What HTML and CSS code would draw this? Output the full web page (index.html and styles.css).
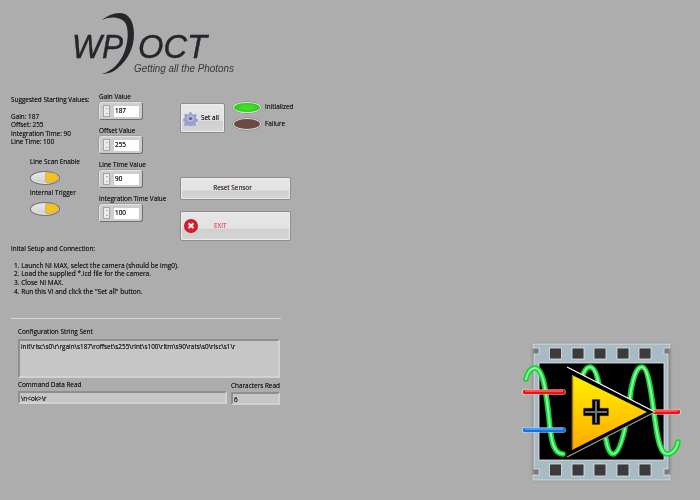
FILE: index.html
```html
<!DOCTYPE html>
<html lang="en">
<head>
<meta charset="utf-8">
<title>WP OCT</title>
<link rel="stylesheet" href="styles.css">
</head>
<body>
<main class="page">
  <header class="logo">
    <svg class="logo-svg" width="190" height="65" viewBox="0 0 190 65">
      <text class="logo-big" x="12" y="45" textLength="51" lengthAdjust="spacingAndGlyphs">WP</text>
      <path class="logo-arc" d="M42 7C47 3 53 0 60 0C69 0 74 9 74 21C74 36 67 47 59 54C54 59 48 61 42 61C52 58 60 50 64 40C68 30 69 19 66 11C63 5 52 2 42 7Z"/>
      <text class="logo-big" x="78" y="45" textLength="69" lengthAdjust="spacingAndGlyphs">OCT</text>
      <text class="logo-tag" x="74" y="59" textLength="100" lengthAdjust="spacingAndGlyphs">Getting all the Photons</text>
    </svg>
  </header>

  <section class="controls">
    <div class="col-left">
      <p class="label">Suggested Starting Values:</p>
      <p class="label values">Gain: 187<br>Offset: 255<br>Integration Time: 90<br>Line Time: 100</p>
      <div class="toggle first">
        <span class="label">Line Scan Enable</span>
        <span class="switch"><span class="knob"></span></span>
      </div>
      <div class="toggle second">
        <span class="label">Internal Trigger</span>
        <span class="switch"><span class="knob"></span></span>
      </div>
    </div>

    <div class="col-num">
      <div class="field">
        <span class="label">Gain Value</span>
        <div class="numeric"><span class="spin"><i class="up"></i><i class="down"></i></span><span class="num-input">187</span></div>
      </div>
      <div class="field">
        <span class="label">Offset Value</span>
        <div class="numeric"><span class="spin"><i class="up"></i><i class="down"></i></span><span class="num-input">255</span></div>
      </div>
      <div class="field">
        <span class="label">Line Time Value</span>
        <div class="numeric"><span class="spin"><i class="up"></i><i class="down"></i></span><span class="num-input">90</span></div>
      </div>
      <div class="field">
        <span class="label nowrap">Integration Time Value</span>
        <div class="numeric"><span class="spin"><i class="up"></i><i class="down"></i></span><span class="num-input">100</span></div>
      </div>
    </div>

    <div class="col-btn">
      <div class="top-row">
        <button class="btn btn-set" type="button">
          <svg class="gear" width="15" height="15" viewBox="0 0 16 16">
            <path class="gear-body" d="M6.500 .8h3l.4 2 1.500.7 1.800-1 2 2.200-1.100 1.700.6 1.500 2 .5-.1 3-2 .3-.7 1.500 1 1.800-2.200 2-1.700-1.100-1.500.6-.5 2h-3l-.4-2-1.500-.7-1.800 1-2-2.200 1.100-1.700-.6-1.500-2-.5.1-3 2-.3.700-1.500-1-1.800 2.200-2 1.700 1.100 1.500-.6z"/>
            <circle class="gear-ring" cx="8" cy="8" r="3.600"/>
            <circle class="gear-hole" cx="8" cy="8" r="1.700"/>
          </svg>
          <span>Set all</span>
        </button>
        <div class="leds">
          <div class="led-row"><span class="led led-on"></span><span class="label">Initialized</span></div>
          <div class="led-row"><span class="led led-off"></span><span class="label">Failure</span></div>
        </div>
      </div>
      <button class="btn btn-reset" type="button">Reset Sensor</button>
      <button class="btn btn-exit" type="button">
        <span class="exit-icon">&#10006;</span>
        <span class="exit-text">EXIT</span>
      </button>
    </div>
  </section>

  <section class="setup">
    <p class="label">Inital Setup and Connection:</p>
    <ol class="steps label">
      <li>1. Launch NI MAX, select the camera (should be img0).</li>
      <li>2. Load the supplied *.icd file for the camera.</li>
      <li>3. Close NI MAX.</li>
      <li>4. Run this VI and click the "Set all" button.</li>
    </ol>
  </section>

  <div class="bottom">
    <section class="readouts">
      <hr class="divider">
      <div class="readout-body">
        <span class="label">Configuration String Sent</span>
        <div class="box box-config">init\rlsc\s0\r\rgain\s187\roffset\s255\rint\s100\rltm\s90\rats\s0\rlsc\s1\r</div>
        <div class="readout-row">
          <div class="read-cmd">
            <span class="label">Command Data Read</span>
            <div class="box box-line">\n&lt;ok&gt;\r</div>
          </div>
          <div class="read-chars">
            <span class="label nowrap">Characters Read</span>
            <div class="box box-line">6</div>
          </div>
        </div>
      </div>
    </section>

    <svg class="vi-icon" width="180" height="160" viewBox="0 0 180 160">
      <defs>
        <linearGradient id="amp" x1="0" y1="0" x2="0" y2="1">
          <stop offset="0" stop-color="#fff200"/>
          <stop offset="1" stop-color="#ffa800"/>
        </linearGradient>
      </defs>
      <path class="film-shadow" d="M23 14H160V150H23Z"/>
      <path class="film" d="M23 14H160V18H154V24H158V139H154V145H160V150H23V145H29V139H24V24H29V18H23Z"/>
      <g class="holes">
        <rect x="39.500" y="18" width="12" height="11"/><rect x="62" y="18" width="12" height="11"/><rect x="84" y="18" width="12" height="11"/><rect x="107" y="18" width="12" height="11"/><rect x="129" y="18" width="12" height="11"/>
        <rect x="39.500" y="134" width="12" height="12"/><rect x="62" y="134" width="12" height="12"/><rect x="84" y="134" width="12" height="12"/><rect x="107" y="134" width="12" height="12"/><rect x="129" y="134" width="12" height="12"/>
      </g>
      <rect class="screen" x="29" y="33" width="125" height="97"/>
      <path class="wave-outer" d="M16 49C18 41 21 38 25 38C33 38 36 60 39 88C41 112 44 124 53 124"/>
      <path class="wave-outer" d="M68 60C72 45 75 37 80 37C88 37 91 65 93 85C95 110 98 124 103 124C112 124 118 85 121 60C124 45 127 37 132 37C139 37 142 70 145 90C148 112 151 124 157 124C163 124 167 118 168 112"/>
      <path class="wave" d="M16 49C18 41 21 38 25 38C33 38 36 60 39 88C41 112 44 124 53 124"/>
      <path class="wave" d="M68 60C72 45 75 37 80 37C88 37 91 65 93 85C95 110 98 124 103 124C112 124 118 85 121 60C124 45 127 37 132 37C139 37 142 70 145 90C148 112 151 124 157 124C163 124 167 118 168 112"/>
      <path class="wire-glow" d="M15 62H53M15 100H53M145 82H168"/>
      <path class="wire-red" d="M15 62H53M145 82H168"/>
      <path class="wire-blue" d="M15 100H53"/>
      <path class="wire-shine" d="M15 61H53M145 81H168"/>
      <path class="wire-shine-blue" d="M15 99H53"/>
      <path class="amp-body" d="M57 37L145 82L57 127Z"/>
      <path class="amp-line-top" d="M57 37L145 82"/>
      <path class="amp-line-bot" d="M57 127L145 82"/>
      <path class="amp-fill" d="M62 45L137 82L62 120Z"/>
      <path class="amp-edge" d="M62.500 46V119"/>
      <path class="plus-halo" d="M73 82H99M86 69V95"/>
      <path class="plus-out" d="M73.500 82H98.500M86 69.500V94.500"/>
      <path class="plus-in" d="M75 82H97M86 71V93"/>
    </svg>
  </div>
</main>
</body>
</html>
```

FILE: styles.css
```css
* { box-sizing: border-box; }
html, body { margin: 0; padding: 0; }
body {
  width: 700px;
  height: 500px;
  overflow: hidden;
  background: #adadad;
  font-family: "Open Sans", "Liberation Sans", sans-serif;
  font-size: 6.4px;
  line-height: 8.5px;
  color: #1c1c1c;
  text-shadow: 0 0 .4px #333;
}
.page { width: 700px; height: 500px; display: flex; flex-direction: column; filter: blur(0.35px); }
p { margin: 0; }
.label { font-size: 6.4px; line-height: 8.5px; color: #1c1c1c; }
.nowrap { white-space: nowrap; }

/* logo */
.logo { height: 90px; padding: 13px 0 0 60px; }
.logo-svg { display: block; }
.logo-big { font-family: "Liberation Sans", sans-serif; font-style: italic; font-size: 34px; fill: #25252b; stroke: #25252b; stroke-width: .4; text-shadow: none; }
.logo-tag { font-family: "Liberation Sans", sans-serif; font-style: italic; font-size: 10.500px; fill: #38383c; text-shadow: none; }
.logo-arc { fill: #25252b; }

/* controls */
.controls { display: flex; height: 153px; }
.col-left { width: 99px; padding: 6px 0 0 11px; }
.values { margin-top: 8px; }
.toggle { display: flex; flex-direction: column; padding-left: 19px; gap: 4.500px; }
.toggle.first { margin-top: 11px; }
.toggle.second { margin-top: 4px; }
.switch {
  width: 30px; height: 14px; border-radius: 50%;
  background: linear-gradient(#e8e8e8, #cfcfcf);
  border: 1px solid #707070;
  box-shadow: inset 0 0 0 1px #ececec;
  display: flex; justify-content: flex-end; align-items: center; padding: 1px 1px 1px 0;
}
.knob { width: 12px; height: 9px; border-radius: 0 50% 50% 0 / 0 50% 50% 0; background: #f7c01e; box-shadow: 0 0 0 .5px #a39255; }

.col-num { width: 81px; padding-top: 3px; display: flex; flex-direction: column; }
.field { height: 34px; display: flex; flex-direction: column; }
.numeric {
  width: 44px; height: 18px; margin-top: 0;
  display: flex; align-items: center; gap: 3px; padding: 0 3px;
  background: #cdcdcd;
  border-radius: 3px;
  border: 1px solid #e2e2e2;
  border-right: 1px solid #6f6f6f;
  border-bottom: 1px solid #6f6f6f;
  box-shadow: -.5px -.5px 0 #8f8f8f;
}
.spin { width: 7px; height: 12px; display: flex; flex-direction: column; flex: none; border: 1px solid #a4a4a4; background: #ececec; }
.spin i { flex: 1; display: flex; align-items: center; justify-content: center; }
.spin i::before { content: ""; border-left: 1.500px solid transparent; border-right: 1.500px solid transparent; }
.spin .up::before { border-bottom: 1.500px solid #777; }
.spin .down::before { border-top: 1.500px solid #777; }
.num-input {
  flex: 1; height: 12px; background: #fff; padding-left: 2px; font-size: 6.4px; line-height: 12px; color: #111;
  box-shadow: inset .5px .5px 0 #999;
}

.col-btn { width: 112px; padding-top: 13px; display: flex; flex-direction: column; }
.top-row { display: flex; gap: 8px; height: 30px; }
.btn {
  font-family: "Open Sans", "Liberation Sans", sans-serif;
  font-size: 6.4px; line-height: 8.5px; color: #1c1c1c;
  padding: 0; margin: 0;
  border: 1px solid #8d8d8d;
  border-radius: 2px;
  background: linear-gradient(#e6e6e6 0, #e2e2e2 58%, #cfcfcf 62%, #d6d6d6 100%);
  box-shadow: inset 0 0 0 1px #ececec;
  text-shadow: 0 0 .4px #333;
}
.btn-set { width: 45px; height: 30px; flex: none; display: flex; align-items: center; gap: 3px; padding-left: 2px; }
.gear { flex: none; }
.gear-body { fill: #9ea0cc; stroke: #f0f0f6; stroke-width: .7; }
.gear-ring { fill: #b6b8da; }
.gear-hole { fill: #5c5e8c; }
.leds { display: flex; flex-direction: column; gap: 5px; margin-top: -1px; }
.led-row { display: flex; align-items: center; gap: 4px; }
.led { width: 28px; height: 11px; border-radius: 50%; border: 1px solid #e3e3e3; box-shadow: 0 0 0 .5px #777; display: block; }
.led-on { background: radial-gradient(ellipse at center, #3fe024 30%, #1fb812 100%); }
.led-off { background: #6a4942; height: 12px; }
.btn-reset { width: 111px; height: 23px; margin-top: 44px; color: #5a4040; padding-right: 6px; }
.btn-exit { width: 111px; height: 30px; margin-top: 11px; display: flex; align-items: center; padding-left: 3px; }
.exit-icon {
  width: 14px; height: 14px; border-radius: 50%; flex: none;
  background: radial-gradient(circle, #e02030 40%, #a80f1a 100%);
  color: #fff; font-family: "DejaVu Sans", sans-serif; font-weight: bold; font-size: 9px; line-height: 14px; text-align: center; text-shadow: none;
}
.exit-text { color: #e8202c; margin-left: 16px; text-shadow: none; }

/* setup */
.setup { height: 70px; padding: 2px 0 0 11px; }
.steps { list-style: none; margin: 8px 0 0 3px; padding: 0; font-size: 6.550px; line-height: 8.700px; }

/* bottom */
.bottom { flex: 1; display: flex; position: relative; }
.readouts { width: 281px; padding: 5px 0 0 11px; }
.divider { border: 0; height: 1px; background: #d8d8d8; margin: 0; }
.readout-body { padding: 9px 0 0 7px; }
.box {
  background: #c6c6c6;
  border: 2px solid #8f8f8f;
  border-right-color: #d2d2d2;
  border-bottom-color: #d2d2d2;
  padding: 1px;
  color: #1c1c1c;
}
.box-config { height: 39px; margin-top: 2px; width: 262px; white-space: nowrap; overflow: hidden; padding-top: 2px; }
.readout-row { display: flex; gap: 4px; margin-top: 3px; }
.read-cmd { width: 209px; }
.read-chars { width: 49px; padding-top: 1px; }
.box-line { height: 13px; margin-top: 2px; line-height: 9px; }
.vi-icon { position: absolute; left: 510px; top: 17px; }

/* VI icon */
.film-shadow { fill: #555; opacity: .6; filter: blur(1.500px); }
.film { fill: #a8bbc4; stroke: #e7eef0; stroke-width: .7; }
.holes rect { fill: #3b3b3b; stroke: #dfe8ea; stroke-width: .8; }
.screen { fill: #000; stroke: #e4ecef; stroke-width: .8; }
.wave, .wave-outer, .wire-glow, .wire-red, .wire-blue, .wire-shine, .wire-shine-blue,
.amp-line-top, .amp-line-bot, .amp-edge, .plus-halo, .plus-in, .plus-out { fill: none; }
.wave-outer { stroke: #16d42e; stroke-width: 5.500; stroke-linecap: round; }
.wave { stroke: #86ffa8; stroke-width: 2; stroke-linecap: round; }
.wire-glow { stroke: #fff; stroke-width: 6; stroke-linecap: round; opacity: .55; }
.wire-red { stroke: #f01010; stroke-width: 4.500; stroke-linecap: round; }
.wire-blue { stroke: #0d74e0; stroke-width: 4.500; stroke-linecap: round; }
.wire-shine { stroke: #ff9a9a; stroke-width: 1; }
.wire-shine-blue { stroke: #8ac6ff; stroke-width: 1; }
.amp-body { fill: #000; }
.amp-line-top { stroke: #fff; stroke-width: 1.300; }
.amp-line-bot { stroke: #9a9a9a; stroke-width: 1.300; }
.amp-fill { fill: url(#amp); }
.amp-edge { stroke: #a4701c; stroke-width: 1.500; }
.plus-halo { stroke: #d9b000; stroke-width: 9; }
.plus-out { stroke: #000; stroke-width: 7.500; }
.plus-in { stroke: #6f6f6f; stroke-width: 2; }
```
